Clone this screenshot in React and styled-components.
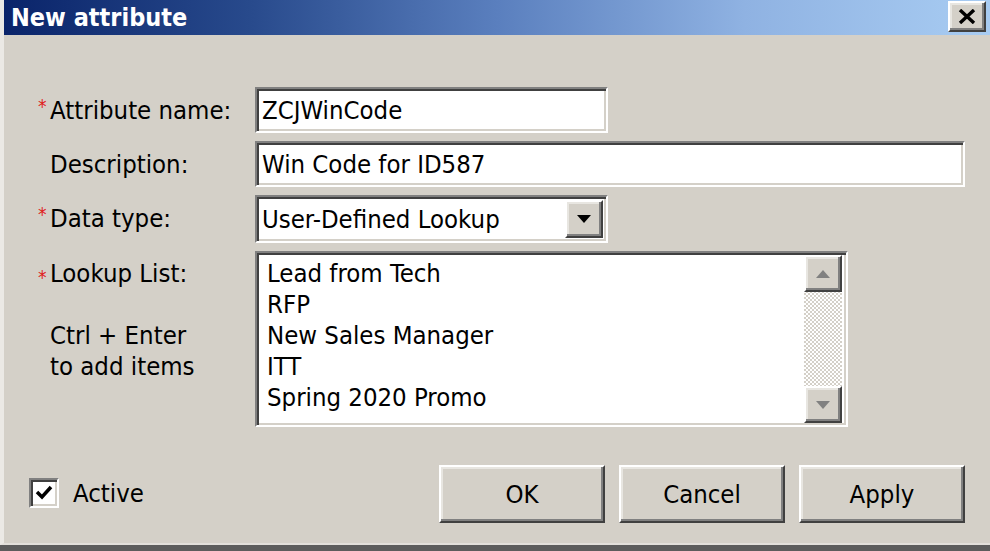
import styled, { createGlobalStyle } from "styled-components";

const Global = createGlobalStyle`
    html, body {
        margin: 0;
        padding: 0;
        background: #4a4a4a;
    }
    body {
        font-family: "DejaVu Sans", Tahoma, sans-serif;
        font-stretch: condensed;
    }
`;

const sunken = `
    border-style: solid;
    border-width: 2px;
    border-color: #808080 #ffffff #ffffff #808080;
    box-shadow: inset 2px 2px 0 #404040, inset -2px -2px 0 #d4d0c8;
`;

const raised = `
    border-style: solid;
    border-width: 2px;
    border-color: #ffffff #404040 #404040 #ffffff;
    box-shadow: inset -2px -2px 0 #808080, inset 2px 2px 0 #e8e6e1;
`;

const S = {
    Screen: styled.div`
        width: 990px;
        height: 551px;
        overflow: hidden;
        display: flex;
        flex-direction: column;
        background: #5c5c5c;
    `,
    Dialog: styled.div`
        height: 543px;
        background: #d4d0c8;
        border-left: 4px solid #ebe9e5;
        border-bottom: 2px solid #e2dfda;
        display: flex;
        flex-direction: column;
        color: #000;
        font-size: 25.5px;
    `,
    TitleBar: styled.div`
        height: 35px;
        flex-shrink: 0;
        display: flex;
        align-items: center;
        justify-content: space-between;
        padding: 0 4px 0 7px;
        background: linear-gradient(to right, #0a246a 0%, #284a8c 25%, #5a7fbe 50%, #8fb2e2 75%, #a8ccf2 100%);
    `,
    Title: styled.span`
        color: #fff;
        font-weight: bold;
        font-size: 25px;
    `,
    CloseButton: styled.button`
        ${raised}
        width: 38px;
        height: 31px;
        margin-top: -3px;
        padding: 0;
        background: #d4d0c8;
        display: flex;
        align-items: center;
        justify-content: center;
    `,
    Form: styled.div`
        display: grid;
        grid-template-columns: 205px 1fr;
        row-gap: 8px;
        padding: 52px 0 0 46px;
    `,
    Label: styled.div`
        height: 46px;
        display: flex;
        align-items: center;
        white-space: nowrap;
    `,
    ListLabel: styled.div`
        display: flex;
        flex-direction: column;
        padding-top: 7px;
        line-height: 31px;
        white-space: nowrap;
    `,
    Hint: styled.div`
        margin-top: 31px;
    `,
    Star: styled.span`
        display: inline-block;
        width: 12px;
        margin-left: -12px;
        color: #e02020;
        font-size: 19px;
        line-height: 1;
        vertical-align: top;
        align-self: flex-start;
        margin-top: 10px;
    `,
    Input: styled.div`
        ${sunken}
        box-sizing: border-box;
        width: ${(p) => p.$width}px;
        height: 46px;
        background: #fff;
        display: flex;
        align-items: center;
        padding-left: 5px;
        white-space: nowrap;
    `,
    Select: styled.div`
        ${sunken}
        box-sizing: border-box;
        width: 353px;
        height: 48px;
        background: #fff;
        display: flex;
        align-items: center;
        justify-content: space-between;
        padding: 0 3px 0 5px;
        white-space: nowrap;
    `,
    DropButton: styled.div`
        ${raised}
        box-sizing: border-box;
        width: 38px;
        height: 38px;
        background: #d4d0c8;
        display: flex;
        align-items: center;
        justify-content: center;
    `,
    List: styled.div`
        ${sunken}
        box-sizing: border-box;
        width: 593px;
        height: 176px;
        background: #fff;
        display: flex;
        justify-content: space-between;
        padding: 2px 4px 2px 10px;
    `,
    Items: styled.div`
        display: flex;
        flex-direction: column;
        line-height: 31px;
        padding-top: 3px;
        white-space: nowrap;
    `,
    Scrollbar: styled.div`
        width: 38px;
        display: flex;
        flex-direction: column;
        justify-content: space-between;
        background: repeating-conic-gradient(#d4d0c8 0 25%, #ffffff 0 50%) 0 0 / 4px 4px;
    `,
    ScrollButton: styled.div`
        ${raised}
        box-sizing: border-box;
        height: 37px;
        background: #d4d0c8;
        display: flex;
        align-items: center;
        justify-content: center;
    `,
    Footer: styled.div`
        display: flex;
        align-items: center;
        justify-content: space-between;
        margin-top: 38px;
        padding: 0 25px 0 25px;
    `,
    CheckRow: styled.label`
        display: flex;
        align-items: center;
        gap: 14px;
        margin-top: -2px;
    `,
    CheckBox: styled.span`
        ${sunken}
        box-sizing: border-box;
        width: 30px;
        height: 30px;
        background: #fff;
        display: flex;
        align-items: center;
        justify-content: center;
    `,
    Buttons: styled.div`
        display: flex;
        gap: 14px;
    `,
    Button: styled.button`
        ${raised}
        box-sizing: border-box;
        width: 166px;
        height: 58px;
        background: #d4d0c8;
        font-family: inherit;
        font-stretch: condensed;
        font-size: 25.5px;
        color: #000;
        padding: 0;
    `,
};

const items = ["Lead from Tech", "RFP", "New Sales Manager", "ITT", "Spring 2020 Promo"];

const Triangle = ({ up, color = "#000" }) => (
    <svg width="14" height="8" viewBox="0 0 14 8">
        <path d={up ? "M7 0 L14 8 L0 8 Z" : "M0 0 L14 0 L7 8 Z"} fill={color} />
    </svg>
);

function App() {
    return (
        <S.Screen>
            <Global />
            <S.Dialog>
                <S.TitleBar>
                    <S.Title>New attribute</S.Title>
                    <S.CloseButton>
                        <svg width="18" height="15" viewBox="0 0 18 15">
                            <path d="M2 1 L16 14 M16 1 L2 14" stroke="#000" strokeWidth="3.4" />
                        </svg>
                    </S.CloseButton>
                </S.TitleBar>

                <S.Form>
                    <S.Label><S.Star>*</S.Star>Attribute name:</S.Label>
                    <S.Input $width={353}>ZCJWinCode</S.Input>

                    <S.Label>Description:</S.Label>
                    <S.Input $width={710}>Win Code for ID587</S.Input>

                    <S.Label><S.Star>*</S.Star>Data type:</S.Label>
                    <S.Select>
                        User-Defined Lookup
                        <S.DropButton><Triangle /></S.DropButton>
                    </S.Select>

                    <S.ListLabel>
                        <div><S.Star>*</S.Star>Lookup List:</div>
                        <S.Hint>Ctrl + Enter<br />to add items</S.Hint>
                    </S.ListLabel>
                    <S.List>
                        <S.Items>
                            {items.map((item) => <span key={item}>{item}</span>)}
                        </S.Items>
                        <S.Scrollbar>
                            <S.ScrollButton><Triangle up color="#808080" /></S.ScrollButton>
                            <S.ScrollButton><Triangle color="#808080" /></S.ScrollButton>
                        </S.Scrollbar>
                    </S.List>
                </S.Form>

                <S.Footer>
                    <S.CheckRow>
                        <S.CheckBox>
                            <svg width="18" height="16" viewBox="0 0 18 16">
                                <path d="M2 7 L7 12 L16 2" stroke="#000" strokeWidth="3.5" fill="none" />
                            </svg>
                        </S.CheckBox>
                        Active
                    </S.CheckRow>
                    <S.Buttons>
                        <S.Button>OK</S.Button>
                        <S.Button>Cancel</S.Button>
                        <S.Button>Apply</S.Button>
                    </S.Buttons>
                </S.Footer>
            </S.Dialog>
        </S.Screen>
    );
}

export default App;
